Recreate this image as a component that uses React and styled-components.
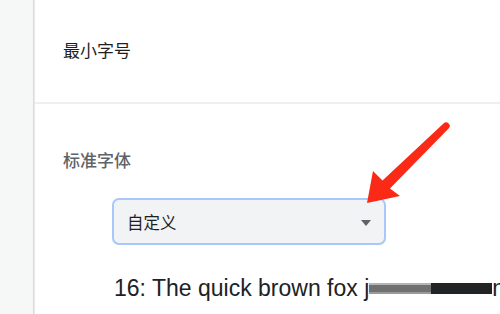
import React from "react";
import styled, { createGlobalStyle } from "styled-components";

const Global = createGlobalStyle`
  html, body { margin: 0; padding: 0; background: #ffffff; }
  body { font-family: "Liberation Sans", "Noto Sans CJK SC", Arial, sans-serif; }
`;

const Page = styled.div`
  position: relative;
  display: flex;
  width: 500px;
  height: 314px;
  overflow: hidden;
  background: #ffffff;
`;

const Gutter = styled.div`
  flex: 0 0 33px;
  background: #f6f8f7;
  border-right: 1px solid #d9dcda;
  box-shadow: 1px 0 1px rgba(0, 0, 0, 0.08);
`;

const Panel = styled.main`
  flex: 1;
  display: flex;
  flex-direction: column;
  min-width: 0;
  margin-left: 1px;
`;

const Row = styled.section`
  display: flex;
  flex-direction: column;
  justify-content: ${(p) => (p.$center ? "center" : "flex-start")};
  height: ${(p) => (p.$height ? `${p.$height}px` : "auto")};
  padding: ${(p) => p.$pad || "0"};
  box-sizing: border-box;
`;

const Divider = styled.hr`
  margin: 0;
  border: none;
  height: 2px;
  background: #efefef;
`;

const Heading = styled.h2`
  margin: 0;
  font-family: "Noto Sans CJK SC", sans-serif;
  font-size: 17px;
  line-height: 20px;
  font-weight: ${(p) => (p.$muted ? 500 : 400)};
  color: ${(p) => (p.$muted ? "#5f6368" : "#1f1f1f")};
`;

const Body = styled.div`
  display: flex;
  flex-direction: column;
  padding-left: 49px;
`;

const Select = styled.div`
  display: flex;
  align-items: center;
  justify-content: space-between;
  width: 274px;
  height: 47px;
  box-sizing: border-box;
  margin-top: 28px;
  padding: 0 13px 0 13px;
  background: #f1f3f4;
  border: 2px solid #a8c7fa;
  border-radius: 7px;
  font-family: "Noto Sans CJK SC", sans-serif;
  font-size: 16.5px;
  color: #1f1f1f;
`;

const Caret = styled.span`
  width: 0;
  height: 0;
  border-left: 5.5px solid transparent;
  border-right: 5.5px solid transparent;
  border-top: 6px solid #5f6368;
  margin-top: 2px;
`;

const Sample = styled.div`
  margin-top: 29px;
  margin-left: 2px;
  white-space: nowrap;
  font-family: "Liberation Sans", Arial, sans-serif;
  font-size: 23px;
  line-height: 28px;
  color: #202124;
`;

const Redact = styled.span`
  display: inline-block;
  width: ${(p) => p.$w}px;
  height: 11px;
  vertical-align: 2px;
  background: ${(p) =>
    p.$dark
      ? "#222325"
      : "linear-gradient(#b4b4b4 0 2px, #707070 2px 9px, #9a9a9a 9px)"};
`;

const Overlay = styled.svg`
  position: absolute;
  left: 0;
  top: 0;
  pointer-events: none;
`;

export default function App() {
  return (
    <>
      <Global />
      <Page>
        <Gutter />
        <Panel>
          <Row $height={102} $center $pad="0 0 3px 28px">
            <Heading>最小字号</Heading>
          </Row>
          <Divider />
          <Row $pad="46px 0 0 28px">
            <Heading $muted>标准字体</Heading>
            <Body>
              <Select>
                <span>自定义</span>
                <Caret />
              </Select>
              <Sample>
                16: The quick brown fox j
                <Redact $w={62} />
                <Redact $w={61} $dark />
                n
              </Sample>
            </Body>
          </Row>
        </Panel>
        <Overlay width="500" height="314" viewBox="0 0 500 314">
          <path
            d="M367 203 L373 171 L382.5 180.5 L443.5 123.5 A3.6 3.6 0 0 1 448.6 128.6 L390 188.5 L400 196 Z"
            fill="#fb2a17"
          />
        </Overlay>
      </Page>
    </>
  );
}
